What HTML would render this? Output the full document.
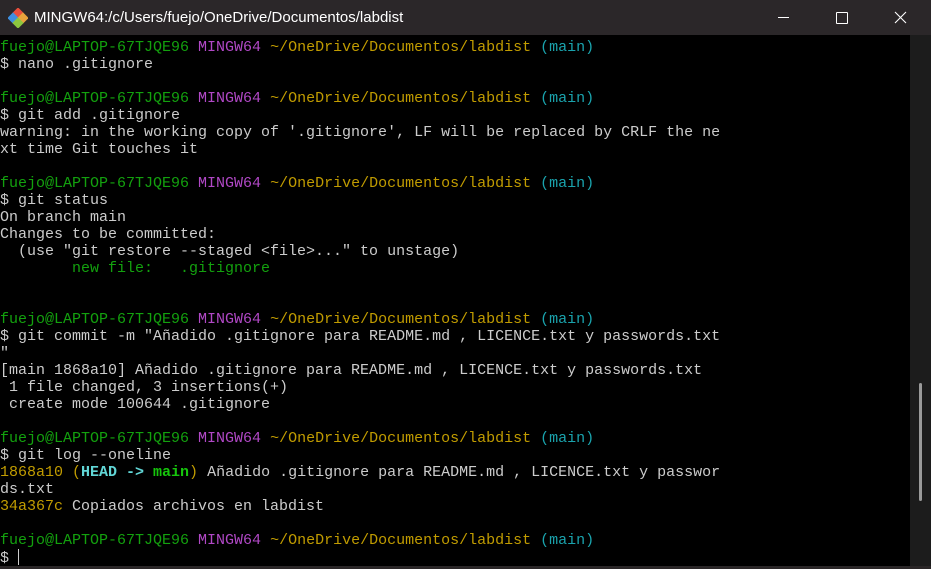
<!DOCTYPE html>
<html><head><meta charset="utf-8"><style>
html,body{margin:0;padding:0;width:931px;height:569px;overflow:hidden;background:#2a2627;}
.title{position:absolute;left:0;top:0;width:931px;height:35px;background:#2b2729;color:#fff;font:15px "Liberation Sans",sans-serif;}
.title .t{position:absolute;left:34px;top:9px;}
.term{position:absolute;left:0;top:35px;width:910px;height:531px;background:#000;}
.sb{position:absolute;left:910px;top:35px;width:21px;height:531px;background:#1c1c1c;}
.thumb{position:absolute;left:919px;top:383px;width:3px;height:118px;background:#9a9a9a;border-radius:2px;}
pre{margin:0;position:absolute;left:0;top:3.5px;font:15px/17px "Liberation Mono",monospace;color:#cccccc;}
.g{color:#13a10e}.m{color:#b148c6}.y{color:#c19c00}.c{color:#1aa3ad}
.hc{color:#61d6d6;font-weight:bold}.hg{color:#16c60c;font-weight:bold}
</style></head><body>
<div class="title">
<svg style="position:absolute;left:8px;top:8px" width="20" height="20" viewBox="0 0 20 20">
<rect x="6" y="1" width="8" height="8" transform="rotate(45 10 5)" fill="#e94e3b"/>
<rect x="1" y="6" width="8" height="8" transform="rotate(45 5 10)" fill="#3e8fe0"/>
<rect x="11" y="6" width="8" height="8" transform="rotate(45 15 10)" fill="#e8a33c"/>
<rect x="6" y="11" width="8" height="8" transform="rotate(45 10 15)" fill="#8cc63f"/>
</svg>
<span class="t">MINGW64:/c/Users/fuejo/OneDrive/Documentos/labdist</span>
<div style="position:absolute;left:778px;top:17px;width:11px;height:1px;background:#fff"></div>
<div style="position:absolute;left:836px;top:12px;width:10px;height:10px;border:1px solid #fff;border-radius:1px"></div>
<svg style="position:absolute;left:894px;top:11px" width="13" height="13"><path d="M1 1L12 12M12 1L1 12" stroke="#fff" stroke-width="1.1"/></svg>
</div>
<div class="term"><pre><span class="g">fuejo@LAPTOP-67TJQE96</span> <span class="m">MINGW64</span> <span class="y">~/OneDrive/Documentos/labdist</span> <span class="c">(main)</span>
$ nano .gitignore

<span class="g">fuejo@LAPTOP-67TJQE96</span> <span class="m">MINGW64</span> <span class="y">~/OneDrive/Documentos/labdist</span> <span class="c">(main)</span>
$ git add .gitignore
warning: in the working copy of '.gitignore', LF will be replaced by CRLF the ne
xt time Git touches it

<span class="g">fuejo@LAPTOP-67TJQE96</span> <span class="m">MINGW64</span> <span class="y">~/OneDrive/Documentos/labdist</span> <span class="c">(main)</span>
$ git status
On branch main
Changes to be committed:
  (use "git restore --staged &lt;file&gt;..." to unstage)
        <span class="g">new file:   .gitignore</span>


<span class="g">fuejo@LAPTOP-67TJQE96</span> <span class="m">MINGW64</span> <span class="y">~/OneDrive/Documentos/labdist</span> <span class="c">(main)</span>
$ git commit -m "Añadido .gitignore para README.md , LICENCE.txt y passwords.txt
"
[main 1868a10] Añadido .gitignore para README.md , LICENCE.txt y passwords.txt
 1 file changed, 3 insertions(+)
 create mode 100644 .gitignore

<span class="g">fuejo@LAPTOP-67TJQE96</span> <span class="m">MINGW64</span> <span class="y">~/OneDrive/Documentos/labdist</span> <span class="c">(main)</span>
$ git log --oneline
<span class="y">1868a10 (</span><span class="hc">HEAD -&gt; </span><span class="hg">main</span><span class="y">)</span> Añadido .gitignore para README.md , LICENCE.txt y passwor
ds.txt
<span class="y">34a367c</span> Copiados archivos en labdist

<span class="g">fuejo@LAPTOP-67TJQE96</span> <span class="m">MINGW64</span> <span class="y">~/OneDrive/Documentos/labdist</span> <span class="c">(main)</span>
$ <span style="display:inline-block;width:1px;height:16px;background:#ccc;vertical-align:-3px"></span></pre></div>
<div class="sb"></div><div class="thumb"></div>
</body></html>
